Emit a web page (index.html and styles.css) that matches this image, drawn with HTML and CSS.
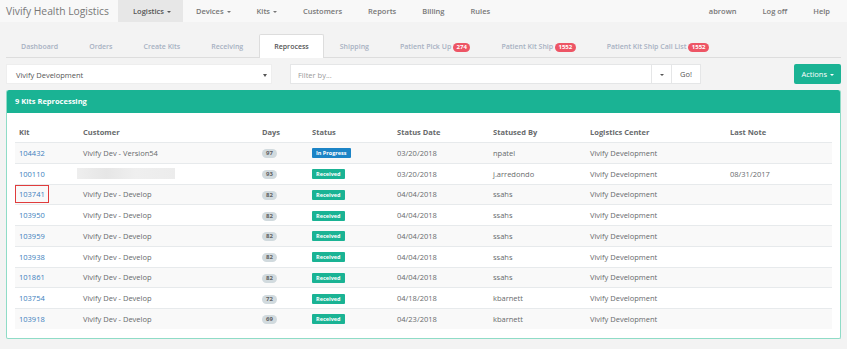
FILE: index.html
```html
<!doctype html>
<html lang="en">
<head>
    <meta charset="UTF-8">
    <title>Reprocess</title>
    <link rel="stylesheet" href="styles.css">
</head>
<body>
<div class="navbar">
    <div class="brand">Vivify Health Logistics</div>
    <ul class="nav">
        <li class="active">Logistics <span class="caret"></span></li>
        <li>Devices <span class="caret"></span></li>
        <li>Kits <span class="caret"></span></li>
        <li>Customers</li>
        <li>Reports</li>
        <li>Billing</li>
        <li>Rules</li>
    </ul>
    <ul class="nav nav-right">
        <li>abrown</li>
        <li>Log off</li>
        <li>Help</li>
    </ul>
</div>
<div class="page">
    <ul class="tabs">
        <li>Dashboard</li>
        <li>Orders</li>
        <li>Create Kits</li>
        <li>Receiving</li>
        <li class="active">Reprocess</li>
        <li>Shipping</li>
        <li>Patient Pick Up <span class="count">274</span></li>
        <li>Patient Kit Ship <span class="count">1552</span></li>
        <li>Patient Kit Ship Call List <span class="count">1552</span></li>
    </ul>
    <div class="toolbar">
        <div class="select">Vivify Development <span class="arrow"></span></div>
        <div class="input-group">
            <div class="filter">Filter by...</div>
            <div class="addon"><span class="caret"></span></div>
            <div class="addon go">Go!</div>
        </div>
        <div class="btn-actions">Actions <span class="caret"></span></div>
    </div>
    <div class="panel">
        <div class="panel-heading">9 Kits Reprocessing</div>
        <div class="panel-body">
            <table class="kits">
                <thead>
                <tr>
                    <th class="c-kit">Kit</th>
                    <th class="c-cust">Customer</th>
                    <th class="c-days">Days</th>
                    <th class="c-status">Status</th>
                    <th class="c-date">Status Date</th>
                    <th class="c-by">Statused By</th>
                    <th class="c-center">Logistics Center</th>
                    <th class="c-note">Last Note</th>
                </tr>
                </thead>
                <tbody>
                <tr>
                    <td><a>104432</a></td>
                    <td>Vivify Dev - Version54</td>
                    <td><span class="days">97</span></td>
                    <td><span class="label blue">In Progress</span></td>
                    <td>03/20/2018</td>
                    <td>npatel</td>
                    <td>Vivify Development</td>
                    <td></td>
                </tr>
                <tr>
                    <td><a>100110</a></td>
                    <td><div class="blur"></div></td>
                    <td><span class="days">93</span></td>
                    <td><span class="label">Received</span></td>
                    <td>03/20/2018</td>
                    <td>j.arredondo</td>
                    <td>Vivify Development</td>
                    <td>08/31/2017</td>
                </tr>
                <tr>
                    <td><a class="marked">103741</a></td>
                    <td>Vivify Dev - Develop</td>
                    <td><span class="days">82</span></td>
                    <td><span class="label">Received</span></td>
                    <td>04/04/2018</td>
                    <td>ssahs</td>
                    <td>Vivify Development</td>
                    <td></td>
                </tr>
                <tr>
                    <td><a>103950</a></td>
                    <td>Vivify Dev - Develop</td>
                    <td><span class="days">82</span></td>
                    <td><span class="label">Received</span></td>
                    <td>04/04/2018</td>
                    <td>ssahs</td>
                    <td>Vivify Development</td>
                    <td></td>
                </tr>
                <tr>
                    <td><a>103959</a></td>
                    <td>Vivify Dev - Develop</td>
                    <td><span class="days">82</span></td>
                    <td><span class="label">Received</span></td>
                    <td>04/04/2018</td>
                    <td>ssahs</td>
                    <td>Vivify Development</td>
                    <td></td>
                </tr>
                <tr>
                    <td><a>103938</a></td>
                    <td>Vivify Dev - Develop</td>
                    <td><span class="days">82</span></td>
                    <td><span class="label">Received</span></td>
                    <td>04/04/2018</td>
                    <td>ssahs</td>
                    <td>Vivify Development</td>
                    <td></td>
                </tr>
                <tr>
                    <td><a>101861</a></td>
                    <td>Vivify Dev - Develop</td>
                    <td><span class="days">82</span></td>
                    <td><span class="label">Received</span></td>
                    <td>04/04/2018</td>
                    <td>ssahs</td>
                    <td>Vivify Development</td>
                    <td></td>
                </tr>
                <tr>
                    <td><a>103754</a></td>
                    <td>Vivify Dev - Develop</td>
                    <td><span class="days">72</span></td>
                    <td><span class="label">Received</span></td>
                    <td>04/18/2018</td>
                    <td>kbarnett</td>
                    <td>Vivify Development</td>
                    <td></td>
                </tr>
                <tr>
                    <td><a>103918</a></td>
                    <td>Vivify Dev - Develop</td>
                    <td><span class="days">69</span></td>
                    <td><span class="label">Received</span></td>
                    <td>04/23/2018</td>
                    <td>kbarnett</td>
                    <td>Vivify Development</td>
                    <td></td>
                </tr>
                </tbody>
            </table>
        </div>
    </div>
</div>
</body>
</html>
```

FILE: styles.css
```css
body{ margin: 0; background: #f3f3f3; font-family: "Open Sans", "Liberation Sans", sans-serif; color: #676a6c; font-size: 7.5px; }
ul{ list-style: none; margin: 0; padding: 0; }

.navbar{ display: flex; height: 22px; background: #f8f8f8; }
.brand{ width: 104px; padding: 0 8px 0 6px; line-height: 22px; font-size: 10.3px; color: #777; white-space: nowrap; }
.nav{ display: flex; }
.nav li{ padding: 0 13px; line-height: 22px; font-size: 7.5px; font-weight: 600; color: #777; }
.nav li.active{ padding: 0 12px 0 15px; background: #e7e7e7; color: #555; }
.nav-right{ margin-left: auto; padding-right: 4px; }
.caret{ display: inline-block; width: 0; height: 0; margin-left: 1px; vertical-align: middle; border-top: 2px solid; border-left: 2px solid transparent; border-right: 2px solid transparent; }

.page{ padding: 12px 6px 0 6px; }
.tabs{ display: flex; border-bottom: 1px solid #ddd; height: 23px; }
.tabs li{ padding: 0 14px; line-height: 23px; margin-right: 1px; font-size: 7px; font-weight: 600; color: #a7b1c2; border: 1px solid transparent; border-bottom: 0; border-radius: 2px 2px 0 0; white-space: nowrap; }
.tabs li.active{ background: #fff; color: #555; border-color: #ddd; height: 23px; }
.count{ display: inline-block; background: #ed5565; color: #fff; font-size: 6px; font-weight: 700; line-height: 9px; padding: 0 3.5px; border-radius: 5px; }

.toolbar{ display: flex; align-items: center; margin-top: 6px; height: 20px; }
.select{ position: relative; width: 266px; height: 20px; line-height: 20px; padding-left: 9px; background: #fff; color: #555; font-size: 7.5px; border: 1px solid #eee; box-sizing: border-box; }
.arrow{ position: absolute; right: 4px; top: 9px; border-top: 3px solid #555; border-left: 2px solid transparent; border-right: 2px solid transparent; }
.input-group{ display: flex; margin-left: 18px; height: 20px; }
.filter{ width: 362px; padding-left: 7px; line-height: 20px; background: #fff; color: #999; border: 1px solid #e5e6e7; box-sizing: border-box; }
.addon{ width: 19px; line-height: 18px; text-align: center; background: #fff; border: 1px solid #e5e6e7; border-left: 0; color: #555; }
.addon .caret{ margin: 0; }
.addon.go{ width: 28px; }
.btn-actions{ margin-left: auto; height: 20px; line-height: 20px; padding: 0 7px; background: #1ab394; color: #fff; border-radius: 2px; font-size: 7.5px; }

.panel{ margin-top: 6px; border: 1px solid #8fdcc7; border-top: 0; border-radius: 2px; background: #fff; }
.panel-heading{ height: 23px; line-height: 23px; padding: 0 8px; background: #1ab394; color: #fff; font-weight: 700; font-size: 7.5px; border-radius: 2px 2px 0 0; }
.panel-body{ padding: 8px 8px 9px 8px; }

.kits{ width: 100%; border-collapse: collapse; }
.kits th{ text-align: left; font-weight: 700; height: 21px; padding: 0 4px; border-bottom: 1px solid #e7eaec; }
.kits td{ height: 19.75px; padding: 0 4px; border-top: 1px solid #e7eaec; }
.kits tbody tr:nth-child(odd){ background: #f9f9f9; }
.kits a{ color: #3d80bd; }
.c-kit{ width: 56px; }
.c-cust{ width: 171px; }
.c-days{ width: 42px; }
.c-status{ width: 77px; }
.c-date{ width: 88px; }
.c-by{ width: 89px; }
.c-center{ width: 132px; }
.marked{ border: 1px solid #e03c3c; padding: 3px 3px; margin-left: -4px; }
.days{ display: inline-block; background: #d1dade; color: #5e5e5e; font-size: 6px; font-weight: 700; padding: 0 4px; line-height: 9px; border-radius: 5px; }
.label{ display: inline-block; background: #1ab394; color: #fff; font-size: 5.5px; font-weight: 700; padding: 0 4px; line-height: 10px; border-radius: 1px; }
.label.blue{ background: #1c84c6; }
.blur{ width: 98px; height: 11px; margin-left: -6px; background: linear-gradient(90deg, #eee, #e6e6e6 30%, #efefef 60%, #ececec); }
```
